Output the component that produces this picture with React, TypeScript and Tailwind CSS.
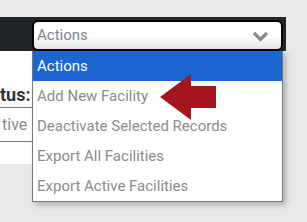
import React from 'react';

const items = ['Add New Facility', 'Deactivate Selected Records', 'Export All Facilities', 'Export Active Facilities'];

export default function App() {
    return (
        <div className="relative w-full h-[222px] bg-[#e9e9e9] overflow-hidden font-['Roboto',sans-serif]">
            <div className="pt-[17px]">
                <div className="w-[286px] h-[34px] bg-[#22252a] pl-[32px] pt-[3px]">
                    <div className="w-[251px] h-[31px] rounded-[6px] border-2 border-black bg-gradient-to-b from-white via-white to-[#e6e6e6] flex items-center justify-between pl-[3px] pr-[12px]">
                        <span className="text-[15px] text-[#7b8593]">Actions</span>
                        <svg width="17" height="11" viewBox="0 0 17 11" className="mt-[1px]">
                            <path d="M2 2 L8.5 8.5 L15 2" fill="none" stroke="#8a8a8a" strokeWidth="3.2" />
                        </svg>
                    </div>
                </div>
                <div className="w-[282px] bg-white pt-[33px] pb-[22px]">
                    <div className="text-[18px] leading-[22px] font-bold text-[#333]">tus:</div>
                    <div className="mt-[1px] h-[35px] border-y border-[#777] flex items-center pl-[2px] text-[16px] text-[#8a8a8a]">tive</div>
                </div>
            </div>

            <div className="absolute left-[32px] top-[51px] w-[251px] bg-white border-x border-b border-[#777] shadow-[3px_3px_6px_rgba(0,0,0,0.25)]">
                <div className="h-[30px] bg-[#1b66d0] text-white text-[15px] flex items-center pl-[4px]">Actions</div>
                {items.map(item => (
                    <div key={item} className="h-[30px] flex items-center pl-[4px] text-[15px] text-[#8b8b8b]">{item}</div>
                ))}
            </div>

            <svg className="absolute left-[160px] top-[74px]" width="56" height="46" viewBox="0 0 56 46">
                <polygon points="0,23 31,0 31,12 56,12 56,34 31,34 31,46" fill="#a3161e" />
            </svg>
        </div>
    );
}
